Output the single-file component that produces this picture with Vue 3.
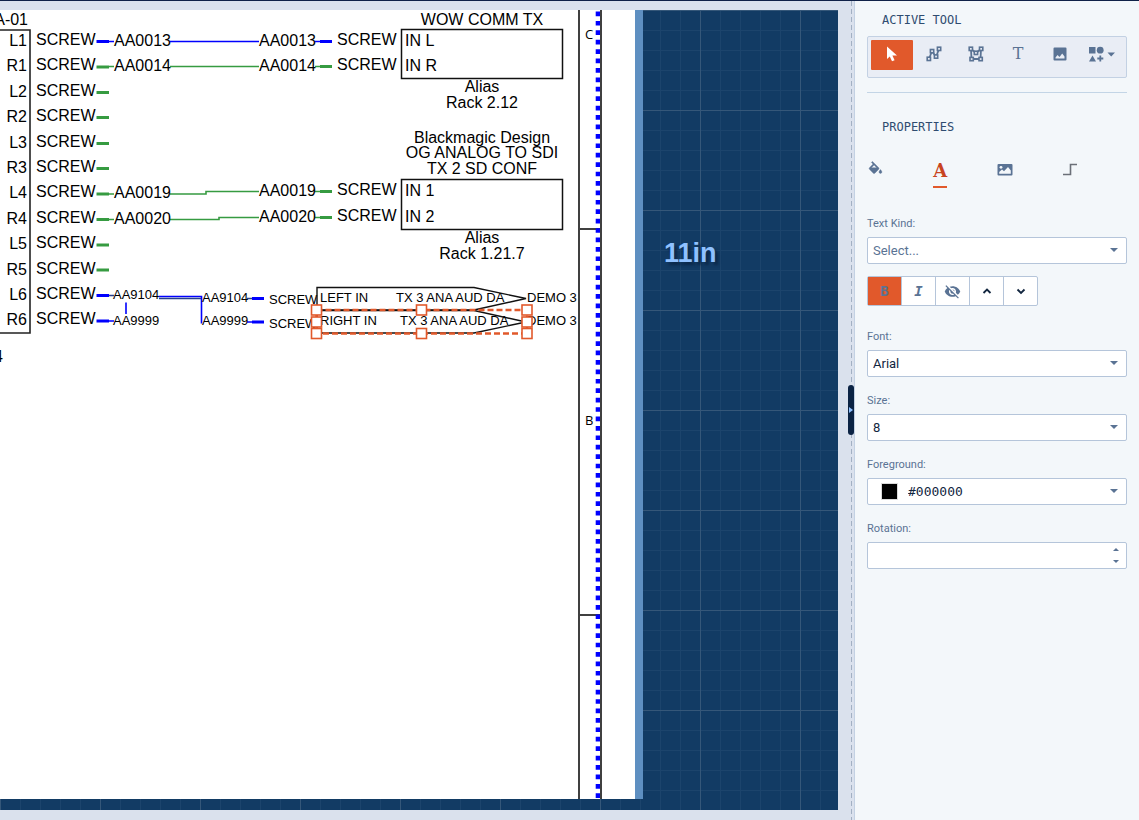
<script setup>
import { ref } from 'vue'

const GREEN = '#369b41'
const BLUE = '#0000fe'

const ports = [
  { name: 'L1', y: 46, sy: 45, line: 41.5, color: BLUE },
  { name: 'R1', y: 71, sy: 70, line: 67, color: GREEN },
  { name: 'L2', y: 97, sy: 96, line: 92.5, color: GREEN },
  { name: 'R2', y: 122, sy: 121, line: 117.5, color: GREEN },
  { name: 'L3', y: 148, sy: 147, line: 143.5, color: GREEN },
  { name: 'R3', y: 173, sy: 172, line: 168.5, color: GREEN },
  { name: 'L4', y: 198, sy: 197, line: 194, color: GREEN },
  { name: 'R4', y: 224, sy: 223, line: 219.5, color: GREEN },
  { name: 'L5', y: 249, sy: 248, line: 245, color: GREEN },
  { name: 'R5', y: 275, sy: 274, line: 270, color: GREEN },
  { name: 'L6', y: 300, sy: 299, line: 295.5, color: BLUE },
  { name: 'R6', y: 325, sy: 324, line: 321, color: BLUE },
]

const cables = [
  { id: 'AA0013', color: BLUE, from: 41.5, to: 41.5, bend: 206, ly: 46, ry: 46, sy: 45 },
  { id: 'AA0014', color: GREEN, from: 66.5, to: 66.5, bend: 206, ly: 71, ry: 71, sy: 70 },
  { id: 'AA0019', color: GREEN, from: 194, to: 191.5, bend: 206, ly: 198, ry: 196, sy: 195 },
  { id: 'AA0020', color: GREEN, from: 219.5, to: 217.5, bend: 219, ly: 224, ry: 222, sy: 221 },
]

const captions = [
  { text: 'WOW COMM TX', y: 25 },
  { text: 'Alias', y: 92 },
  { text: 'Rack 2.12', y: 108 },
  { text: 'Blackmagic Design', y: 143 },
  { text: 'OG ANALOG TO SDI', y: 158 },
  { text: 'TX 2 SD CONF', y: 174 },
  { text: 'Alias', y: 243 },
  { text: 'Rack 1.21.7', y: 259 },
]

const handles = [
  [316.5, 310], [421.5, 310], [527, 310],
  [316.5, 322], [527, 322],
  [316.5, 333.5], [421.5, 333.5], [527, 333.5],
]

const tool = ref('select')
const tools = ['select', 'line', 'polygon', 'text', 'image', 'shapes']
const tab = ref('text')
const tabs = ['fill', 'text', 'image', 'connector']
const bold = ref(true)

const kind = ref('Select...')
const font = ref('Arial')
const size = ref('8')
const color = ref('#000000')
const rotation = ref('')
</script>

<template>
  <div class="app">
    <main class="workspace">
      <div class="board">
        <div class="sheet">
          <svg class="drawing" width="635" height="789" viewBox="0 10 635 789">
            <!-- sheet frame -->
            <g stroke="#404040" stroke-width="2">
              <path d="M579 10V799M579 229H601M579 615H601" fill="none" />
            </g>
            <path d="M598 11.5V799" stroke="#0000fe" stroke-width="4.6" stroke-dasharray="4.7 4.72" />
            <path d="M601 10V799" stroke="#404040" stroke-width="2" />
            <g class="zone">
              <text x="585" y="39">C</text>
              <text x="585" y="425">B</text>
            </g>

            <!-- left device -->
            <path d="M-5 30H30V333H-5" fill="none" stroke="#222" stroke-width="1.6" />
            <text x="28" y="25" text-anchor="end">A-01</text>
            <text x="3" y="362" text-anchor="end">4</text>
            <g v-for="p in ports" :key="p.name">
              <text x="27" :y="p.y" text-anchor="end">{{ p.name }}</text>
              <text x="36" :y="p.sy">SCREW</text>
              <path :d="`M96.5 ${p.line}H109`" :stroke="p.color" stroke-width="3" />
            </g>

            <!-- cables -->
            <g v-for="c in cables" :key="c.id">
              <path :d="`M109 ${c.from}H114M170 ${c.from}H${c.bend}V${c.to}H259M315 ${c.to}H320`" fill="none" :stroke="c.color" stroke-width="1.6" />
              <path :d="`M320 ${c.to}H332`" :stroke="c.color" stroke-width="3" />
              <text x="114" :y="c.ly">{{ c.id }}</text>
              <text x="259" :y="c.ry">{{ c.id }}</text>
              <text x="337" :y="c.sy">SCREW</text>
            </g>

            <!-- small cables -->
            <g fill="none" stroke="#0000fe" stroke-width="1.6">
              <path d="M109 321H114M247 322H252M126 302.5V314" />
              <path d="M158.5 296.5H201.5V323.5" />
              <path d="M109 295.5H114M159 298.5H201M247 298.5H252" stroke="#26408c" />
              <path d="M252 298.5H264M252 322H264" stroke-width="3" />
            </g>
            <g class="small">
              <text x="113" y="299">AA9104</text>
              <text x="113" y="325">AA9999</text>
              <text x="202" y="302">AA9104</text>
              <text x="202" y="325">AA9999</text>
              <text x="269" y="304">SCREW</text>
              <text x="269" y="328">SCREW</text>
            </g>

            <!-- right devices -->
            <g fill="none" stroke="#111" stroke-width="1.5">
              <rect x="401.5" y="29.5" width="161" height="49" />
              <rect x="401.5" y="179.5" width="161" height="50" />
            </g>
            <text x="405" y="46">IN L</text>
            <text x="405" y="71">IN R</text>
            <text x="405" y="196">IN 1</text>
            <text x="405" y="222">IN 2</text>
            <text v-for="c in captions" :key="c.y" x="482" :y="c.y" text-anchor="middle">{{ c.text }}</text>

            <!-- off-page references -->
            <g fill="none" stroke="#111" stroke-width="1.4">
              <path d="M317 287.5H474L526 298.5L474 310H317Z" />
              <path d="M317 310.5H474L526 322L474 333H317Z" />
            </g>
            <g class="small">
              <text x="320" y="302">LEFT IN</text>
              <text x="320" y="325">RIGHT IN</text>
              <text x="396" y="302">TX 3 ANA AUD DA</text>
              <text x="400" y="325">TX 3 ANA AUD DA</text>
              <text x="527" y="302">DEMO 3</text>
              <text x="527" y="325">DEMO 3</text>
            </g>

            <!-- selection -->
            <rect x="316.5" y="310" width="210.5" height="23.5" fill="none" stroke="#e1592b" stroke-width="2.4" stroke-dasharray="6 3" />
            <rect v-for="h in handles" :key="h.join()" :x="h[0] - 5" :y="h[1] - 5" width="10" height="10" fill="#fff" stroke="#e1592b" stroke-width="1.6" />
          </svg>
        </div>
        <span class="dimension">11in</span>
      </div>
    </main>

    <div class="splitter">
      <button class="grip" aria-label="Collapse panel">
        <svg width="4" height="6" viewBox="0 0 4 6"><path d="M0 0L4 3L0 6Z" fill="#8fc0ff" /></svg>
      </button>
    </div>

    <aside class="panel">
      <h2>ACTIVE TOOL</h2>
      <div class="toolbar">
        <button v-for="t in tools" :key="t" :class="{ active: tool === t }" :aria-label="t" @click="tool = t">
          <svg v-if="t === 'select'" width="16" height="16" viewBox="0 0 16 16">
            <path d="M3 .5V13L5.8 10.4L8 15.3L10.6 14.2L8.4 9.5H13Z" fill="#fff" />
          </svg>
          <svg v-else-if="t === 'line'" width="16" height="16" viewBox="0 0 16 16" fill="#e9edf5" stroke="currentColor" stroke-width="1.6">
            <path d="M3 13L6 5L10 11L13 3" fill="none" stroke-width="1.8" />
            <rect x="1.2" y="11.2" width="3.3" height="3.3" /><rect x="4.4" y="3.5" width="3.3" height="3.3" />
            <rect x="8.4" y="8.9" width="3.3" height="3.3" /><rect x="11.4" y="1.2" width="3.3" height="3.3" />
          </svg>
          <svg v-else-if="t === 'polygon'" width="16" height="16" viewBox="0 0 16 16" fill="#e9edf5" stroke="currentColor" stroke-width="1.6">
            <path d="M3 3L8 7L13 3L12.500 13H3.500Z" fill="none" stroke-width="1.8" />
            <rect x="1.2" y="1.2" width="3.3" height="3.3" /><rect x="11.5" y="1.2" width="3.3" height="3.3" />
            <rect x="6.3" y="5.2" width="3.3" height="3.3" />
            <rect x="2" y="11.4" width="3.3" height="3.3" /><rect x="11" y="11.4" width="3.3" height="3.3" />
          </svg>
          <span v-else-if="t === 'text'" class="glyph-t">T</span>
          <svg v-else-if="t === 'image'" width="16" height="16" viewBox="0 0 16 16">
            <path fill-rule="evenodd" d="M2.5 1.5H13.5Q14.5 1.5 14.5 2.5V13.5Q14.5 14.5 13.5 14.5H2.5Q1.500 14.5 1.500 13.5V2.5Q1.500 1.500 2.5 1.500ZM3.5 12.5H12.5V10.5L10.2 7.5L7.5 11L5.5 9L3.5 11.5Z" fill="currentColor" />
          </svg>
          <svg v-else width="26" height="16" viewBox="0 0 26 16" fill="currentColor">
            <rect x="0" y="1" width="6.5" height="6.5" /><circle cx="11.2" cy="4.2" r="3.4" />
            <path d="M3.5 9.5L7 15.5H0ZM10.4 9.5H12.2V11.6H14.3V13.4H12.2V15.5H10.4V13.4H8.3V11.6H10.4ZM18.5 6.5H26L22.2 10.5Z" />
          </svg>
        </button>
      </div>
      <hr>
      <h2 class="second">PROPERTIES</h2>
      <div class="tabs">
        <button v-for="t in tabs" :key="t" :class="{ active: tab === t }" :aria-label="t + ' properties'" @click="tab = t">
          <svg v-if="t === 'fill'" width="17" height="17" viewBox="0 -2 24 24" fill="currentColor">
            <path d="M16.56 8.94L7.62 0 6.21 1.41l2.38 2.38-5.15 5.15c-.59.59-.59 1.54 0 2.12l5.5 5.5c.29.29.68.44 1.06.44s.77-.15 1.06-.44l5.5-5.5c.59-.58.59-1.53 0-2.12zM6.2 9L10 5.210 13.8 9H6.2zM19 11.5s-2 2.17-2 3.5c0 1.1.9 2 2 2s2-.9 2-2c0-1.33-2-3.5-2-3.5z" stroke="currentColor" stroke-width=".6" />
          </svg>
          <span v-else-if="t === 'text'" class="glyph-a">A</span>
          <svg v-else-if="t === 'image'" width="16" height="18" viewBox="0 0 16 18">
            <rect x=".5" y="4" width="15" height="11.5" rx="1" fill="currentColor" />
            <circle cx="4" cy="7.3" r="1.4" fill="#f3f7fa" />
            <path d="M2.2 13.8V12L5 9.5L7 11.2L11 7L13.8 10.5V13.8Z" fill="#f3f7fa" />
          </svg>
          <svg v-else width="16" height="18" viewBox="0 0 16 18">
            <path d="M1 14.5H8.5V4.5H15" fill="none" stroke="#6b7078" stroke-width="1.6" />
          </svg>
        </button>
      </div>

      <div class="field">
        <label for="kind">Text Kind:</label>
        <div class="control">
          <select id="kind" v-model="kind" class="placeholder"><option>Select...</option></select>
          <i class="caret"></i>
        </div>
      </div>

      <div class="format">
        <button :class="{ active: bold }" aria-label="Bold" @click="bold = !bold"><b>B</b></button>
        <button aria-label="Italic"><em>I</em></button>
        <button aria-label="Hide">
          <svg width="17" height="17" viewBox="0 0 24 24" fill="currentColor">
            <path d="M12 7c2.76 0 5 2.24 5 5 0 .65-.13 1.26-.36 1.83l2.92 2.92c1.51-1.26 2.7-2.89 3.43-4.75-1.73-4.39-6-7.5-11-7.5-1.4 0-2.74.25-3.98.7l2.16 2.16C10.74 7.13 11.35 7 12 7zM2 4.27l2.28 2.28.46.46C3.08 8.3 1.78 10.02 1 12c1.73 4.39 6 7.5 11 7.5 1.55 0 3.03-.3 4.38-.84l.42.42L19.73 22 21 20.73 3.27 3 2 4.27zM7.53 9.8l1.55 1.55c-.05.21-.08.43-.08.65 0 1.66 1.34 3 3 3 .22 0 .44-.03.65-.08l1.55 1.55c-.67.33-1.41.53-2.2.53-2.76 0-5-2.24-5-5 0-.79.2-1.53.53-2.2zm4.31-.78l3.15 3.15.02-.16c0-1.66-1.34-3-3-3l-.17.01z" />
          </svg>
        </button>
        <button aria-label="Raise">
          <svg width="10" height="8" viewBox="0 0 10 8"><path d="M1.5 6L5 2.5L8.5 6" fill="none" stroke="#12263f" stroke-width="1.8" /></svg>
        </button>
        <button aria-label="Lower">
          <svg width="10" height="8" viewBox="0 0 10 8"><path d="M1.5 2.5L5 6L8.5 2.5" fill="none" stroke="#12263f" stroke-width="1.8" /></svg>
        </button>
      </div>

      <div class="field">
        <label for="font">Font:</label>
        <div class="control">
          <select id="font" v-model="font"><option>Arial</option></select>
          <i class="caret"></i>
        </div>
      </div>
      <div class="field">
        <label for="size">Size:</label>
        <div class="control">
          <select id="size" v-model="size"><option>8</option></select>
          <i class="caret"></i>
        </div>
      </div>
      <div class="field">
        <label for="color">Foreground:</label>
        <div class="control">
          <select id="color" v-model="color" class="color"><option>#000000</option></select>
          <i class="swatch" :style="{ background: color }"></i>
          <i class="caret"></i>
        </div>
      </div>
      <div class="field">
        <label for="rotation">Rotation:</label>
        <div class="control">
          <input id="rotation" v-model="rotation" type="text" inputmode="numeric">
          <div class="spin">
            <button aria-label="Increase"><i class="up"></i></button>
            <button aria-label="Decrease"><i class="down"></i></button>
          </div>
        </div>
      </div>
    </aside>
  </div>
</template>

<style>
body {
  margin: 0;
  background: #dae1ed;
}
</style>

<style scoped>
* {
  box-sizing: border-box;
}
.app {
  display: flex;
  height: 100vh;
  border-top: 1px solid #0f2148;
  background: #dae1ed;
  color: #5a7394;
  font: 11px/16px Roboto, "Liberation Sans", sans-serif;
}
button {
  display: flex;
  align-items: center;
  justify-content: center;
  margin: 0;
  padding: 0;
  border: 0;
  background: none;
  color: inherit;
  font: inherit;
}
svg {
  display: block;
}
.workspace {
  flex: 1;
  min-width: 0;
  padding: 9px 10px 10px 0;
}
.board {
  position: relative;
  height: 100%;
  overflow: hidden;
  background-color: #123b64;
  background-image:
    linear-gradient(90deg, #355779 1px, transparent 1px),
    linear-gradient(#355779 1px, transparent 1px),
    linear-gradient(90deg, #1c446c 1px, transparent 1px),
    linear-gradient(#1c446c 1px, transparent 1px);
  background-size: 100px 100px, 100px 100px, 20px 20px, 20px 20px;
}
.sheet {
  position: absolute;
  top: 0;
  bottom: 11px;
  left: 0;
  overflow: hidden;
  border-right: 8px solid #5e8fc1;
  background: #fff;
}
.drawing {
  font-family: "Liberation Sans", Arial, sans-serif;
  font-size: 16px;
  fill: #000;
}
.small {
  font-size: 13px;
}
.zone {
  font-family: "Open Sans", sans-serif;
  font-size: 13px;
}
.dimension {
  position: absolute;
  top: 227px;
  left: 664px;
  color: #8fc1ff;
  font: bold 27px/32px "Liberation Sans", Arial, sans-serif;
  text-shadow: 3px 3px 3px #0b2748;
}
.splitter {
  display: flex;
  align-items: center;
  width: 6px;
  padding-bottom: 2px;
  background: repeating-linear-gradient(#a2b0c3 0 5px, transparent 5px 8px) 3px 0 / 1px 100% no-repeat;
}
.grip {
  width: 6px;
  height: 50px;
  border-radius: 3px;
  background: #0b2344;
}
.panel {
  width: 285px;
  padding: 11px 12px;
  border-left: 1px solid #c3d1e3;
  background: #f3f7fa;
}
h2 {
  margin: 0 0 8px 15px;
  color: #2f4c70;
  font: 12px/16px "DejaVu Sans Mono", monospace;
}
h2.second {
  margin-bottom: 25px;
}
.toolbar {
  display: grid;
  grid-template-columns: repeat(6, 1fr);
  padding: 3px 3px 7px;
  border: 1px solid #c3d1e3;
  border-radius: 2px;
  background: #e9edf5;
}
.toolbar button {
  height: 30px;
  padding-bottom: 2px;
  border-radius: 1px;
}
.toolbar .active,
.format .active {
  background: #e1592b;
}
.glyph-t {
  font: 16px/28px "DejaVu Serif", serif;
}
hr {
  height: 1px;
  margin: 14px 0 26px;
  border: 0;
  background: #c3d5e6;
}
.tabs {
  display: flex;
  justify-content: space-between;
  margin-bottom: 28px;
  padding-right: 49px;
}
.tabs button {
  align-items: flex-start;
  height: 28px;
}
.tabs .active {
  border-bottom: 2px solid #e1592b;
  color: #c8441f;
}
.glyph-a {
  font: bold 18px/22px "DejaVu Serif", serif;
}
.field {
  margin-bottom: 16px;
}
label {
  display: block;
  margin-bottom: 5px;
}
.control {
  position: relative;
}
select,
input {
  display: block;
  width: 100%;
  height: 27px;
  margin: 0;
  padding: 0 24px 0 5px;
  border: 1px solid #b5c5da;
  border-radius: 2px;
  background: #fff;
  color: #12263f;
  font: 13px/16px Roboto, "Liberation Sans", sans-serif;
  appearance: none;
}
.placeholder {
  color: #5a7394;
}
.color {
  padding-left: 40px;
  font: 13px/16px "DejaVu Sans Mono", monospace;
}
.swatch {
  position: absolute;
  top: 5px;
  left: 14px;
  width: 17px;
  height: 17px;
  border: 1px solid #d9d9d9;
}
.caret,
.up,
.down {
  border: 4px solid transparent;
  border-top-color: #5a7394;
  border-bottom-width: 0;
}
.caret {
  position: absolute;
  top: 11px;
  right: 9px;
  pointer-events: none;
}
.up,
.down {
  border-width: 3px 3px 0;
}
.up {
  border-width: 0 3px 3px;
  border-bottom-color: #5a7394;
}
.spin {
  position: absolute;
  top: 1px;
  right: 4px;
  bottom: 1px;
  display: grid;
  width: 14px;
}
.format {
  display: flex;
  width: fit-content;
  margin: -4px 0 23px;
  border: 1px solid #b5c5da;
  border-radius: 2px;
  background: #fff;
}
.format button {
  width: 34px;
  height: 28px;
  border-left: 1px solid #b5c5da;
}
.format button:first-child {
  width: 33px;
  border-left: 0;
}
.format b,
.format em {
  font: bold 14px/16px "DejaVu Sans Mono", monospace;
}
.format em {
  font-style: italic;
}
</style>
